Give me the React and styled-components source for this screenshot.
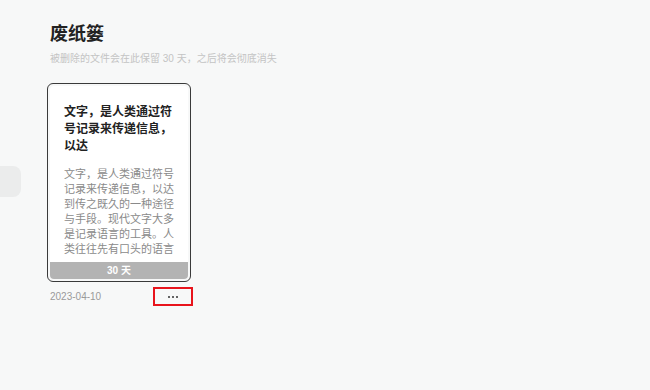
import styled, { createGlobalStyle } from "styled-components";

const GlobalStyle = createGlobalStyle`
  html, body {
    margin: 0;
    padding: 0;
    background: #f7f8f8;
  }
  body {
    font-family: "Liberation Sans", "Noto Sans CJK SC", sans-serif;
  }
`;

const Page = styled.div`
  min-height: 390px;
  padding: 20px 50px;
  box-sizing: border-box;
`;

const SideHandle = styled.div`
  position: fixed;
  left: -10px;
  top: 166px;
  width: 31px;
  height: 31px;
  border-radius: 8px;
  background: #ebecec;
`;

const Title = styled.h1`
  margin: 0;
  font-size: 18px;
  line-height: 24px;
  font-weight: bold;
  color: #222;
  font-family: "Noto Sans CJK SC", sans-serif;
`;

const Subtitle = styled.p`
  margin: 8px 0 0;
  font-size: 10px;
  line-height: 14px;
  color: #c4c4c4;
  font-family: "Liberation Sans", "Noto Sans CJK SC", sans-serif;
`;

const Grid = styled.div`
  display: flex;
  gap: 16px;
  margin-top: 17px;
`;

const Item = styled.div`
  display: flex;
  flex-direction: column;
  width: 138px;
`;

const Frame = styled.div`
  margin-left: -3px;
  width: 144px;
  box-sizing: border-box;
  border: 1px solid #3a3a3a;
  border-radius: 6px;
  padding: 2px;
`;

const Card = styled.div`
  height: 193px;
  background: #fff;
  border-radius: 4px;
  overflow: hidden;
  display: flex;
  flex-direction: column;
`;

const CardBody = styled.div`
  flex: 1;
  padding: 16px 14px 0;
  overflow: hidden;
`;

const CardTitle = styled.div`
  font-family: "Noto Sans CJK SC", sans-serif;
  font-size: 12px;
  font-weight: bold;
  line-height: 17px;
  color: #222;
`;

const CardText = styled.div`
  margin-top: 13px;
  max-height: 90px;
  overflow: hidden;
  font-family: "Noto Sans CJK SC", sans-serif;
  font-size: 11px;
  line-height: 15px;
  color: #8a8a8a;
`;

const DaysBar = styled.div`
  height: 17px;
  background: #b3b3b3;
  color: #fff;
  font-size: 10px;
  font-weight: bold;
  line-height: 17px;
  text-align: center;
  font-family: "Liberation Sans", "Noto Sans CJK SC", sans-serif;
`;

const Meta = styled.div`
  display: flex;
  align-items: center;
  justify-content: space-between;
  margin-top: 5px;
  margin-right: -5px;
`;

const DateText = styled.span`
  font-size: 10px;
  color: #9a9a9a;
`;

const MoreButton = styled.button`
  width: 40px;
  height: 19px;
  box-sizing: border-box;
  border: 2px solid #e8141c;
  background: transparent;
  padding: 0;
  display: flex;
  align-items: center;
  justify-content: center;
  gap: 2px;
  cursor: pointer;
`;

const Dot = styled.span`
  width: 2px;
  height: 2px;
  background: #333;
  border-radius: 50%;
`;

const items = [
  {
    title: "文字，是人类通过符号记录来传递信息，以达",
    text: "文字，是人类通过符号记录来传递信息，以达到传之既久的一种途径与手段。现代文字大多是记录语言的工具。人类往往先有口头的语言",
    days: "30 天",
    date: "2023-04-10",
  },
];

export default function App() {
  return (
    <>
      <GlobalStyle />
      <SideHandle />
      <Page>
        <Title>废纸篓</Title>
        <Subtitle>被删除的文件会在此保留 30 天，之后将会彻底消失</Subtitle>
        <Grid>
          {items.map((it) => (
            <Item key={it.date}>
              <Frame>
                <Card>
                  <CardBody>
                    <CardTitle>{it.title}</CardTitle>
                    <CardText>{it.text}</CardText>
                  </CardBody>
                  <DaysBar>{it.days}</DaysBar>
                </Card>
              </Frame>
              <Meta>
                <DateText>{it.date}</DateText>
                <MoreButton>
                  <Dot />
                  <Dot />
                  <Dot />
                </MoreButton>
              </Meta>
            </Item>
          ))}
        </Grid>
      </Page>
    </>
  );
}
